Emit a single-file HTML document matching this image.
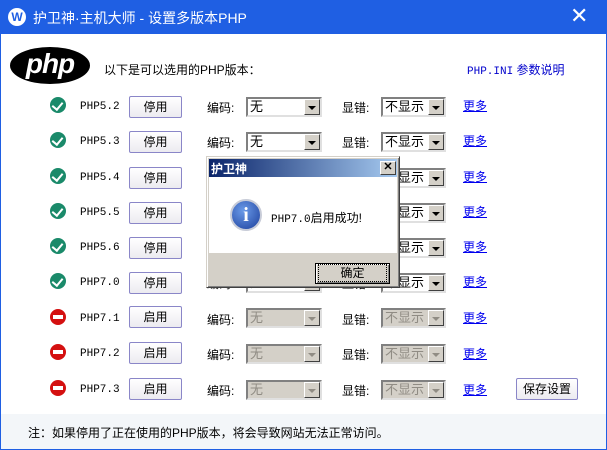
<!DOCTYPE html>
<html><head><meta charset="utf-8"><style>
*{margin:0;padding:0;box-sizing:border-box}
body{width:607px;height:450px;overflow:hidden;background:#fff;font-family:"Liberation Sans","Noto Sans CJK SC",sans-serif;font-size:12px;color:#000;position:relative}
.a{position:absolute}
#tb{left:0;top:0;width:607px;height:34px;background:#1f5fe3;color:#fff;font-size:14px}
#frame{left:0;top:34px;width:607px;height:416px;border:1px solid #1f5fe3;border-top:none}
#foot{left:1px;top:414px;width:605px;height:35px;background:#f3f6f9}
.btn{position:absolute;width:53px;height:22px;border:1px solid #8a86c8;border-radius:2px;background:linear-gradient(#fff,#ecebf0);text-align:center;line-height:20px;font-size:12px}
.cb{position:absolute;height:20px;border:2px solid;border-color:#808080 #e0e0e0 #e0e0e0 #808080;background:#fff;font-size:13px;line-height:16px;padding-left:2px}
.cb .ar{position:absolute;right:0;top:0;width:16px;height:16px;background:#d4d0c8;border:1px solid;border-color:#fff #404040 #404040 #fff}
.cb .ar:after{content:"";position:absolute;left:3px;top:6px;border:4px solid transparent;border-top:4px solid #000;border-bottom:none}
.cb.d{background:#d4d0c8;color:#908c84}
.cb.d .ar:after{border-top-color:#908c84}
.lnk{position:absolute;color:#0000ee;text-decoration:underline;font-size:12px}
.mono{font-family:"Liberation Mono","Noto Sans CJK SC",monospace;font-size:11px}
.pl{margin-top:2px}
.ok{width:16px;height:16px;border-radius:50%;background:#1a8a6a;position:absolute}
.ok:after{content:"";position:absolute;left:4px;top:3px;width:5px;height:8px;border:solid #fff;border-width:0 2.5px 2.5px 0;transform:rotate(40deg)}
.no{width:16px;height:16px;border-radius:50%;background:#d41010;position:absolute}
.no:after{content:"";position:absolute;left:3px;top:6px;width:10px;height:4px;background:#fff}
</style></head><body>
<div id="tb" class="a">
 <div class="a" style="left:8px;top:8px;width:18px;height:18px;border-radius:50%;background:#fff;color:#1f5fe3;font-weight:bold;font-size:12px;text-align:center;line-height:18px">W</div>
 <div class="a" style="left:33px;top:8px">护卫神·主机大师 - 设置多版本PHP</div>
 <div class="a" style="left:570px;top:3px;font-size:22px">✕</div>
</div>
<div id="frame" class="a"></div>
<div id="foot" class="a"><div class="a" style="left:27px;top:10px;font-size:12px">注：如果停用了正在使用的PHP版本，将会导致网站无法正常访问。</div></div>

<div class="a" style="left:10px;top:47px;width:80px;height:37px;border-radius:50%;background:#000;color:#fff;font:italic bold 28px 'Liberation Sans',sans-serif;text-align:center;line-height:33px;letter-spacing:-1px">php</div>
<div class="a" style="left:104px;top:61px">以下是可以选用的PHP版本：</div>
<div class="a" style="left:467px;top:61px;color:#0000cc"><span class="mono">PHP.INI</span> 参数说明</div>

<div class="ok" style="left:50px;top:97px"></div><div class="a mono" style="left:80px;top:101px">PHP5.2</div>
<div class="btn" style="left:129px;top:96px">停用</div><div class="a" style="left:207px;top:99px">编码:</div>
<div class="cb" style="left:246px;top:97px;width:76px">无<span class="ar"></span></div><div class="a" style="left:342px;top:99px">显错:</div>
<div class="cb" style="left:381px;top:97px;width:65px">不显示<span class="ar"></span></div><div class="lnk" style="left:463px;top:97px">更多</div>

<div class="ok" style="left:50px;top:132px"></div><div class="a mono" style="left:80px;top:136px">PHP5.3</div>
<div class="btn" style="left:129px;top:131px">停用</div><div class="a" style="left:207px;top:134px">编码:</div>
<div class="cb" style="left:246px;top:132px;width:76px">无<span class="ar"></span></div><div class="a" style="left:342px;top:134px">显错:</div>
<div class="cb" style="left:381px;top:132px;width:65px">不显示<span class="ar"></span></div><div class="lnk" style="left:463px;top:132px">更多</div>

<div class="ok" style="left:50px;top:168px"></div><div class="a mono" style="left:80px;top:172px">PHP5.4</div>
<div class="btn" style="left:129px;top:167px">停用</div><div class="a" style="left:207px;top:170px">编码:</div>
<div class="cb" style="left:246px;top:168px;width:76px">无<span class="ar"></span></div><div class="a" style="left:342px;top:170px">显错:</div>
<div class="cb" style="left:381px;top:168px;width:65px">不显示<span class="ar"></span></div><div class="lnk" style="left:463px;top:168px">更多</div>

<div class="ok" style="left:50px;top:203px"></div><div class="a mono" style="left:80px;top:207px">PHP5.5</div>
<div class="btn" style="left:129px;top:202px">停用</div><div class="a" style="left:207px;top:205px">编码:</div>
<div class="cb" style="left:246px;top:203px;width:76px">无<span class="ar"></span></div><div class="a" style="left:342px;top:205px">显错:</div>
<div class="cb" style="left:381px;top:203px;width:65px">不显示<span class="ar"></span></div><div class="lnk" style="left:463px;top:203px">更多</div>

<div class="ok" style="left:50px;top:238px"></div><div class="a mono" style="left:80px;top:242px">PHP5.6</div>
<div class="btn" style="left:129px;top:237px">停用</div><div class="a" style="left:207px;top:240px">编码:</div>
<div class="cb" style="left:246px;top:238px;width:76px">无<span class="ar"></span></div><div class="a" style="left:342px;top:240px">显错:</div>
<div class="cb" style="left:381px;top:238px;width:65px">不显示<span class="ar"></span></div><div class="lnk" style="left:463px;top:238px">更多</div>

<div class="ok" style="left:50px;top:273px"></div><div class="a mono" style="left:80px;top:277px">PHP7.0</div>
<div class="btn" style="left:129px;top:272px">停用</div><div class="a" style="left:207px;top:275px">编码:</div>
<div class="cb" style="left:246px;top:273px;width:76px">无<span class="ar"></span></div><div class="a" style="left:342px;top:275px">显错:</div>
<div class="cb" style="left:381px;top:273px;width:65px">不显示<span class="ar"></span></div><div class="lnk" style="left:463px;top:273px">更多</div>

<div class="no" style="left:50px;top:309px"></div><div class="a mono" style="left:80px;top:313px">PHP7.1</div>
<div class="btn" style="left:129px;top:306px">启用</div><div class="a" style="left:207px;top:311px">编码:</div>
<div class="cb d" style="left:246px;top:308px;width:76px">无<span class="ar"></span></div><div class="a" style="left:342px;top:311px">显错:</div>
<div class="cb d" style="left:381px;top:308px;width:65px">不显示<span class="ar"></span></div><div class="lnk" style="left:463px;top:309px">更多</div>

<div class="no" style="left:50px;top:344px"></div><div class="a mono" style="left:80px;top:348px">PHP7.2</div>
<div class="btn" style="left:129px;top:342px">启用</div><div class="a" style="left:207px;top:346px">编码:</div>
<div class="cb d" style="left:246px;top:344px;width:76px">无<span class="ar"></span></div><div class="a" style="left:342px;top:346px">显错:</div>
<div class="cb d" style="left:381px;top:344px;width:65px">不显示<span class="ar"></span></div><div class="lnk" style="left:463px;top:345px">更多</div>

<div class="no" style="left:50px;top:380px"></div><div class="a mono" style="left:80px;top:384px">PHP7.3</div>
<div class="btn" style="left:129px;top:378px">启用</div><div class="a" style="left:207px;top:382px">编码:</div>
<div class="cb d" style="left:246px;top:380px;width:76px">无<span class="ar"></span></div><div class="a" style="left:342px;top:382px">显错:</div>
<div class="cb d" style="left:381px;top:380px;width:65px">不显示<span class="ar"></span></div><div class="lnk" style="left:463px;top:381px">更多</div>
<div class="btn" style="left:516px;top:378px;width:62px">保存设置</div>

<!-- dialog -->
<div class="a" style="left:206px;top:156px;width:194px;height:132px;background:#d4d0c8;border:1px solid;border-color:#d4d0c8 #404040 #404040 #d4d0c8;box-shadow:inset 1px 1px #fff,inset -1px -1px #808080">
 <div class="a" style="left:2px;top:2px;width:188px;height:18px;background:linear-gradient(90deg,#0a246a,#a6caf0)"></div>
 <div class="a" style="left:4px;top:3px;color:#fff;font-weight:bold;font-size:12px">护卫神</div>
 <div class="a" style="left:173px;top:4px;width:16px;height:14px;background:#d4d0c8;border:1px solid;border-color:#fff #404040 #404040 #fff;font-size:11px;line-height:11px;text-align:center;font-weight:bold">✕</div>
 <div class="a" style="left:2px;top:20px;width:188px;height:76px;background:#fff"></div>
 <div class="a" style="left:23px;top:42px;width:32px;height:32px;border-radius:50%;background:radial-gradient(circle at 40% 35%,#6a9ae8,#1c3f9c);border:2px solid #c8ccd8;color:#fff;font:bold 20px 'Liberation Serif',serif;text-align:center;line-height:28px">i</div>
 <div class="a" style="left:64px;top:52px;font-size:12px"><span class="mono">PHP7.0</span>启用成功!</div>
 <div class="a" style="left:108px;top:106px;width:75px;height:21px;border:1px solid #000;background:#d4d0c8;box-shadow:inset 1px 1px #fff,inset -1px -1px #808080;text-align:center;line-height:19px;font-size:12px"><span style="outline:1px dotted #000;outline-offset:1px;padding:0 20px">确定</span></div>
</div>
</body></html>
